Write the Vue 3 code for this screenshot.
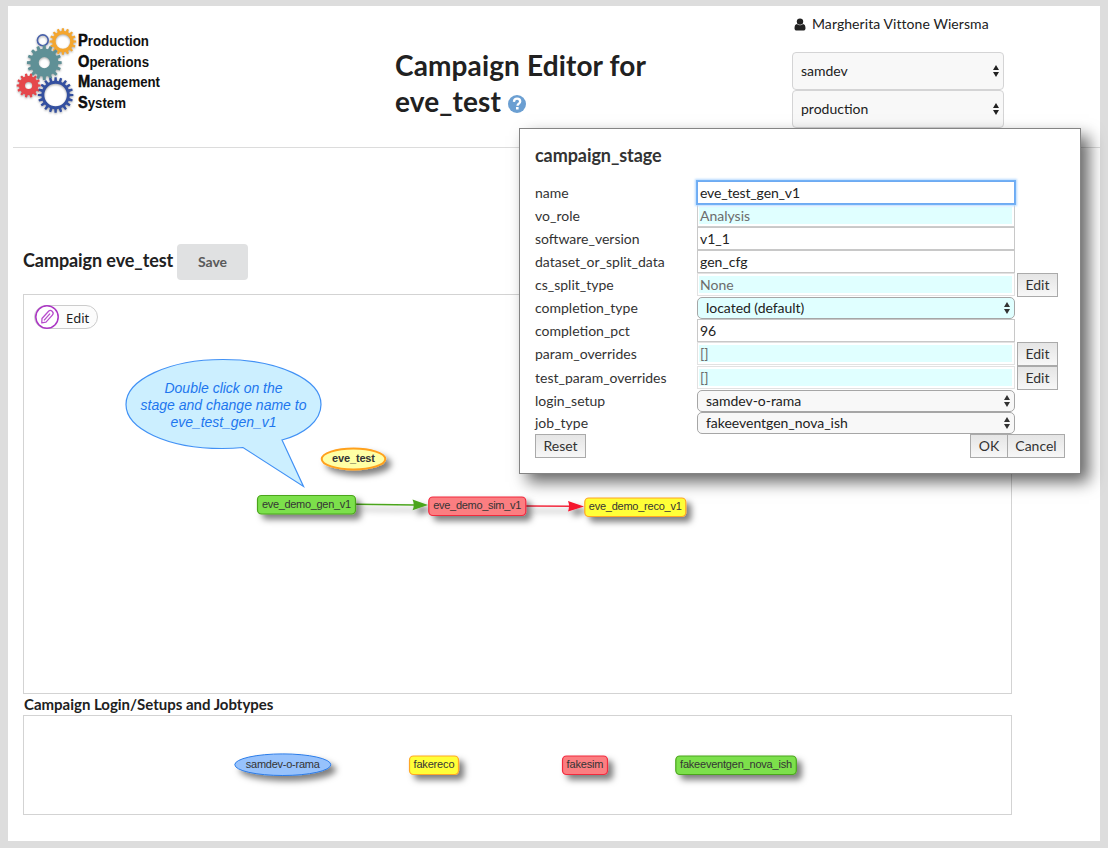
<script setup>
function gear(cx, cy, outer, root, hole, teeth) {
  const pts = []
  const step = (Math.PI * 2) / teeth
  for (let i = 0; i < teeth; i++) {
    const a = i * step
    const corners = [[root, -0.3], [outer, -0.2], [outer, 0.2], [root, 0.3]]
    for (const [r, k] of corners) {
      pts.push((cx + r * Math.cos(a + k * step)).toFixed(2) + ' ' + (cy + r * Math.sin(a + k * step)).toFixed(2))
    }
  }
  return `M${pts.join('L')}ZM${cx - hole} ${cy}a${hole} ${hole} 0 1 0 ${hole * 2} 0a${hole} ${hole} 0 1 0 ${-hole * 2} 0Z`
}

const gears = [
  { d: gear(46.9, 15.5, 13.3, 10.6, 7.3, 16), fill: '#f4a62f' },
  { d: gear(28.3, 36.6, 17.4, 14, 5.6, 16), fill: '#5f9096' },
  { d: gear(12.6, 59.5, 12, 9.6, 3.6, 14), fill: '#e5474b' },
  { d: gear(39.6, 69, 17.8, 14.2, 11.3, 20), fill: '#3450a0' }
]

const logoWords = [
  { head: 'P', tail: 'roduction', y: 20, w: 71 },
  { head: 'O', tail: 'perations', y: 40.7, w: 71 },
  { head: 'M', tail: 'anagement', y: 61.3, w: 82 },
  { head: 'S', tail: 'ystem', y: 82, w: 48 }
]

const rows = [
  { label: 'name', value: 'eve_test_gen_v1', kind: 'input focus' },
  { label: 'vo_role', value: 'Analysis', kind: 'input locked strong' },
  { label: 'software_version', value: 'v1_1', kind: 'input' },
  { label: 'dataset_or_split_data', value: 'gen_cfg', kind: 'input' },
  { label: 'cs_split_type', value: 'None', kind: 'input locked', edit: true },
  { label: 'completion_type', value: 'located (default)', kind: 'select cyan' },
  { label: 'completion_pct', value: '96', kind: 'input' },
  { label: 'param_overrides', value: '[]', kind: 'input locked', edit: true },
  { label: 'test_param_overrides', value: '[]', kind: 'input locked', edit: true },
  { label: 'login_setup', value: 'samdev-o-rama', kind: 'select' },
  { label: 'job_type', value: 'fakeeventgen_nova_ish', kind: 'select' }
]

const stages = [
  { name: 'eve_demo_gen_v1', x: 257.5, y: 495.5, w: 98, tw: 89, fill: '#7be04c', stroke: '#4ba51c' },
  { name: 'eve_demo_sim_v1', x: 428.8, y: 497, w: 97, tw: 88, fill: '#fb7e81', stroke: '#f2293e' },
  { name: 'eve_demo_reco_v1', x: 584.8, y: 498, w: 101, tw: 93, fill: '#ffff38', stroke: '#ffa726' }
]

const jobTypes = [
  { name: 'fakereco', x: 409.5, y: 756, w: 49, tw: 41, fill: '#ffff38', stroke: '#ffa726' },
  { name: 'fakesim', x: 562.5, y: 756, w: 45, tw: 37, fill: '#fb7e81', stroke: '#f2293e' },
  { name: 'fakeeventgen_nova_ish', x: 675.8, y: 756, w: 120.5, tw: 112, fill: '#7be04c', stroke: '#4ba51c' }
]
</script>

<template>
  <div class="frame">
    <div class="page">
      <header class="top">
        <svg class="logo" width="152" height="90" viewBox="0 0 152 90">
          <g class="gears">
            <circle cx="26.8" cy="14.3" r="5.4" fill="none" stroke="#4861ab" stroke-width="1.6" />
            <path v-for="(g, i) in gears" :key="i" :d="g.d" :fill="g.fill" fill-rule="evenodd" />
          </g>
          <text v-for="w in logoWords" :key="w.tail" x="62" :y="w.y" :textLength="w.w" lengthAdjust="spacingAndGlyphs" class="logo-text"><tspan class="logo-head">{{ w.head }}</tspan>{{ w.tail }}</text>
        </svg>
        <h1>Campaign Editor for<br>eve_test
          <svg class="help" width="18" height="18" viewBox="0 0 18 18">
            <circle cx="9" cy="9" r="9" fill="#6b9fd2" />
            <path d="M5.9 6.8C6.1 4.7 7.3 3.7 9.1 3.7c1.9 0 3.1 1.1 3.1 2.7 0 2.2-2.7 2.3-2.7 4.4" fill="none" stroke="#fff" stroke-width="2.3" />
            <rect x="8" y="12" width="2.6" height="2.5" fill="#fff" />
          </svg>
        </h1>
        <div class="account">
          <div class="user">
            <svg width="12" height="13" viewBox="0 0 12 13" fill="#212121"><circle cx="6" cy="3.6" r="3.2" /><path d="M3 6C1.200 6.200.500 8 .500 10.200.500 11.700 1.400 12.500 2.700 12.500H9.300C10.600 12.500 11.500 11.700 11.500 10.200 11.500 8 10.800 6.200 9 6 8.200 6.800 7.200 7.200 6 7.200S3.800 6.800 3 6Z" /></svg>
            <span>Margherita Vittone Wiersma</span>
          </div>
          <div v-for="opt in ['samdev', 'production']" :key="opt" class="picker">
            <span>{{ opt }}</span>
            <svg width="8" height="14" viewBox="0 0 8 14"><path d="M4 1 7 6H1ZM4 13 1 8H7Z" fill="#212121" /></svg>
          </div>
        </div>
      </header>

      <div class="heading">
        <h2>Campaign eve_test</h2>
        <button class="save">Save</button>
      </div>

      <section class="canvas">
        <button class="edit-pill">
          <svg width="24" height="24" viewBox="0 0 24 24">
            <circle cx="12" cy="12" r="11.200" fill="#fff" stroke="#ab35c4" stroke-width="1.500" />
            <g transform="rotate(42 12 12)" fill="none" stroke="#b84dce" stroke-width="1.300" stroke-linejoin="round">
              <path d="M9.300 7Q9.300 4.300 12 4.300T14.700 7V16.500L12 19.800 9.300 16.500ZM12 7.500V16.500" />
            </g>
          </svg>
          <span>Edit</span>
        </button>
        <svg class="graph" width="987" height="398" viewBox="24 295 987 398">
          <defs>
            <filter id="nodeShadow" x="-20%" y="-50%" width="150%" height="250%">
              <feDropShadow dx="5" dy="5" stdDeviation="3" flood-color="#000" flood-opacity="0.5" />
            </filter>
            <filter id="edgeShadow" filterUnits="userSpaceOnUse" x="340" y="485" width="260" height="40">
              <feDropShadow dx="5" dy="5" stdDeviation="3" flood-color="#000" flood-opacity="0.5" />
            </filter>
          </defs>
          <path class="bubble" d="M282 440C304 434 321 421 321 404.500C321 379.500 278 359.500 223 359.500C169 359.500 126 379.500 126 404.500C126 429 168 448.500 222 448.500C230 448.500 236 448.200 243 447.500L303.500 486.500Z" />
          <g class="bubble-text">
            <text x="223.500" y="393" textLength="118">Double click on the</text>
            <text x="223.500" y="410" textLength="166">stage and change name to</text>
            <text x="223.500" y="427" textLength="106">eve_test_gen_v1</text>
          </g>
          <g filter="url(#edgeShadow)">
            <path d="M356 504.300 415 504.900" stroke="#4ba51c" stroke-width="1.500" />
            <path d="M412.500 499.500 428 505 412.500 510.300Q415 505 412.500 499.500Z" fill="#4ba51c" />
            <path d="M526 505.900 571 506.300" stroke="#f2293e" stroke-width="1.500" />
            <path d="M568 501 584 506.400 568 511.500Q570 506 568 501Z" fill="#f5142d" />
          </g>
          <g filter="url(#nodeShadow)"><ellipse cx="353.500" cy="459" rx="31.800" ry="10.500" fill="#ffffa5" stroke="#ffa11f" stroke-width="2" /></g>
          <text class="node-text bold" x="353.500" y="462" textLength="43">eve_test</text>
          <g v-for="s in stages" :key="s.name">
            <rect :x="s.x" :y="s.y" :width="s.w" height="18.500" rx="4" :fill="s.fill" :stroke="s.stroke" stroke-width="1.200" filter="url(#nodeShadow)" />
            <text class="node-text" :x="s.x + s.w / 2" :y="s.y + 12.100" :textLength="s.tw">{{ s.name }}</text>
          </g>
        </svg>
      </section>

      <h3>Campaign Login/Setups and Jobtypes</h3>
      <section class="palette">
        <svg class="graph" width="987" height="98" viewBox="24 716 987 98">
          <ellipse cx="282.800" cy="764.700" rx="48" ry="10.800" fill="#97c2fc" stroke="#2b7ce9" filter="url(#nodeShadow)" />
          <text class="node-text" x="282.800" y="767.800" textLength="74">samdev-o-rama</text>
          <g v-for="s in jobTypes" :key="s.name">
            <rect :x="s.x" :y="s.y" :width="s.w" height="18.500" rx="4" :fill="s.fill" :stroke="s.stroke" stroke-width="1.200" filter="url(#nodeShadow)" />
            <text class="node-text" :x="s.x + s.w / 2" :y="s.y + 11.800" :textLength="s.tw">{{ s.name }}</text>
          </g>
        </svg>
      </section>
    </div>

    <div class="dialog">
      <div class="dialog-title">campaign_stage</div>
      <div class="form">
        <div v-for="r in rows" :key="r.label" class="row" :class="{ tall: r.edit, short: r.kind.startsWith('select') }">
          <label>{{ r.label }}</label>
          <div class="field" :class="r.kind">
            <span>{{ r.value }}</span>
            <svg v-if="r.kind.startsWith('select')" width="8" height="14" viewBox="0 0 8 14"><path d="M4 1 7 6H1ZM4 13 1 8H7Z" fill="#333" /></svg>
          </div>
          <button v-if="r.edit" class="plain">Edit</button>
        </div>
        <div class="actions">
          <button class="plain reset">Reset</button>
          <button class="plain ok">OK</button>
          <button class="plain cancel">Cancel</button>
        </div>
      </div>
    </div>
  </div>
</template>

<style>
body { background: #ddd; overflow: hidden; }
</style>

<style scoped>
* { box-sizing: border-box; }
.frame { position: relative; height: 848px; padding: 6px 8px 7px; background: #ddd; color: #212121; font: 14px/18px Lato, sans-serif; overflow: hidden; }
.page { height: 835px; background: #fff; }
h1, h2, h3 { margin: 0; font-weight: 700; }
button { margin: 0; padding: 0; font-family: inherit; }
svg { display: block; flex: none; }
.top { display: grid; grid-template-columns: 374px 397px 1fr; height: 142px; margin-left: 5px; border-bottom: 1px solid #dcdcdc; }
.logo { margin: 20px 0 0 3px; }
.gears { filter: drop-shadow(0 1px 1px rgba(0, 0, 0, 0.35)); }
.logo-text { font: bold 14.500px "Liberation Sans", sans-serif; fill: #111; }
.logo-head { font-size: 16px; stroke: #000; stroke-width: 0.500px; }
h1 { padding: 41px 0 0 8px; font-size: 28px; line-height: 36px; letter-spacing: 0.13px; }
.help { display: inline-block; margin-left: 0; vertical-align: -1px; }
.account { padding: 9px 0 0 8px; }
.user { display: flex; align-items: center; gap: 6px; height: 18px; margin: 0 0 19px 2px; letter-spacing: 0.07px; }
.picker { display: flex; align-items: center; justify-content: space-between; width: 212px; height: 38px; padding: 0 3px 0 8px; border: 1px solid #d4d4d5; border-radius: 4px; background: #f8f8f8; }
.heading { display: flex; align-items: center; gap: 4px; margin: 96px 0 0 15px; height: 36px; }
h2 { width: 150px; font-size: 18px; line-height: 24px; margin-top: -4px; letter-spacing: -0.08px; white-space: nowrap; }
.save { width: 71px; height: 36px; padding-bottom: 2px; border: 0; border-radius: 4px; background: #e0e1e2; color: #5a5a5a; font-size: 14px; font-weight: 700; }
.canvas { position: relative; width: 989px; height: 400px; margin: 14px 0 0 15px; border: 1px solid #d3d3d3; }
.edit-pill { position: absolute; left: 10px; top: 10px; display: flex; align-items: center; gap: 7px; width: 64px; height: 24px; border: 1px solid #ccc; border-radius: 12px; background: #fcfcfc; color: #222; font: 13px "Noto Sans", sans-serif; }
.edit-pill span { padding-top: 2px; }
.graph { overflow: hidden; }
h3 { margin: 0 0 0 16px; height: 21px; font-size: 15px; line-height: 21px; letter-spacing: -0.01px; }
.palette { width: 989px; height: 100px; margin-left: 15px; border: 1px solid #d3d3d3; }
.bubble { fill: #ccefff; stroke: #4191f5; stroke-width: 1.200; }
.bubble-text { font: italic 14px "Liberation Sans", sans-serif; fill: #1d76ee; text-anchor: middle; }
.node-text { font: 11px "Liberation Sans", sans-serif; fill: #343434; text-anchor: middle; }
.bold { font-weight: 700; }
.dialog { position: absolute; left: 519px; top: 128px; width: 562px; height: 346px; padding: 16px 15px 0; border: 1px solid #848484; background: #fff; color: #333; box-shadow: 8px 8px 15px rgba(0, 0, 0, 0.600); }
.dialog-title { height: 36px; font-size: 18px; font-weight: 700; line-height: 21px; letter-spacing: -0.07px; }
.row { display: grid; grid-template-columns: 162px 318px 41px; column-gap: 0; height: 23px; align-items: start; }
.row .plain { margin-left: 2px; }
.tall { height: 24px; }
.short { height: 22px; }
label { line-height: 24px; }
.short label { line-height: 22px; }
.field { display: flex; align-items: center; height: 23px; border: 1px solid #c8c8c8; background: #fff; padding-left: 2px; line-height: 20px; color: #222; }
.field span { flex: 1; }
.locked { padding: 2px 2px 2px 1px; border-color: #e2e2e2; color: #6c6c6c; }
.locked span { height: 17px; padding-left: 1px; line-height: 17px; background: #e0ffff; }
.strong { border-color: #ccc; }
.focus { border: 1px solid #6eaaf2; box-shadow: 0 0 0 1px #72b1f5, 0 0 2px 2px #b6d9ff; position: relative; letter-spacing: -0.15px; }
.select { height: 22px; padding: 0 3px 0 8px; border: 1px solid #a6a6a6; border-radius: 5px; background: #f8f8f8; letter-spacing: -0.03px; }
.cyan { background: #e0ffff; }
.plain { width: 41px; height: 24px; border: 1px solid #aaa; background: linear-gradient(#e5e5e5, #f7f7f7); color: #333; font-size: 14px; line-height: 20px; }
.actions { display: flex; }
.reset { width: 51px; }
.ok { width: 38px; margin-left: auto; }
.cancel { width: 58px; margin-left: -1px; }
</style>
